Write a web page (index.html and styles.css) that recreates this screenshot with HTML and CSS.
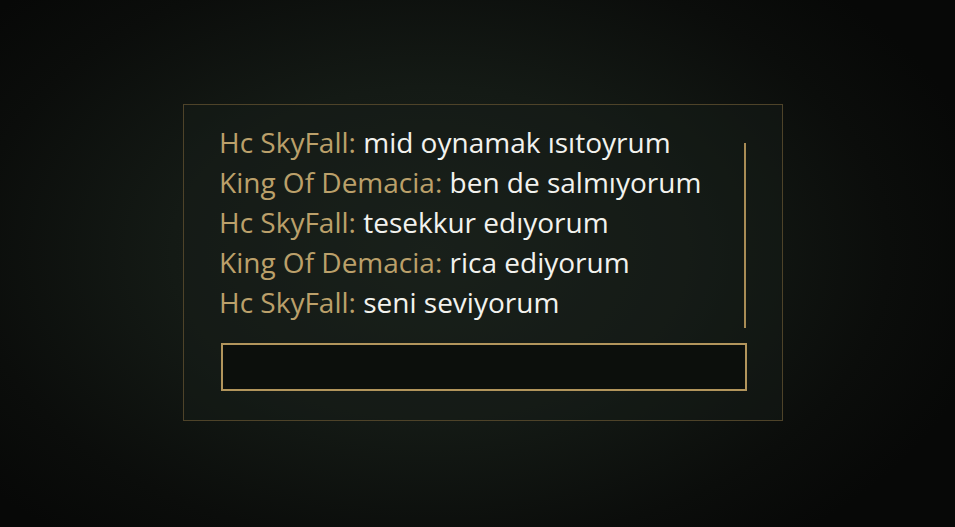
FILE: index.html
```html
<!DOCTYPE html>
<html lang="tr">
<head>
<meta charset="utf-8">
<link rel="stylesheet" href="styles.css">
</head>
<body>
<div class="stage">
  <div class="panel">
    <div class="chat">
      <div class="log">
        <div class="line"><span class="name">Hc SkyFall:</span> <span class="msg">mid oynamak ısıtoyrum</span></div>
        <div class="line"><span class="name">King Of Demacia:</span> <span class="msg">ben de salmıyorum</span></div>
        <div class="line"><span class="name">Hc SkyFall:</span> <span class="msg">tesekkur edıyorum</span></div>
        <div class="line"><span class="name">King Of Demacia:</span> <span class="msg">rica ediyorum</span></div>
        <div class="line"><span class="name">Hc SkyFall:</span> <span class="msg">seni seviyorum</span></div>
      </div>
      <div class="scrollbar"></div>
    </div>
    <div class="input"></div>
  </div>
</div>
</body>
</html>
```
FILE: styles.css
```css
html, body {
  margin: 0;
  padding: 0;
  width: 955px;
  height: 527px;
  overflow: hidden;
}
body {
  background: radial-gradient(ellipse 60% 70% at 45% 48%, #1c231d 0%, #141a15 45%, #0b0d0b 80%, #070807 100%);
  font-family: "Open Sans", "Noto Sans", sans-serif;
}
.stage {
  padding-top: 104px;
  padding-left: 183px;
}
.panel {
  width: 598px;
  height: 315px;
  border: 1px solid #4e4329;
  background: rgba(22, 29, 24, 0.45);
  display: flex;
  flex-direction: column;
}
.chat {
  display: flex;
  justify-content: space-between;
  padding: 17px 36px 0 35px;
  height: 216px;
  box-sizing: border-box;
}
.log {
  display: flex;
  flex-direction: column;
}
.line {
  font-size: 28px;
  line-height: 40px;
  white-space: nowrap;
}
.name {
  color: #bba06a;
}
.msg {
  color: #f2f2ee;
}
.scrollbar {
  width: 2px;
  height: 185px;
  margin-top: 21px;
  background: #a88c55;
}
.input {
  margin: 22px 0 0 37px;
  width: 522px;
  height: 44px;
  border: 2px solid #b2955c;
  background: #0c0f0c;
}
```
